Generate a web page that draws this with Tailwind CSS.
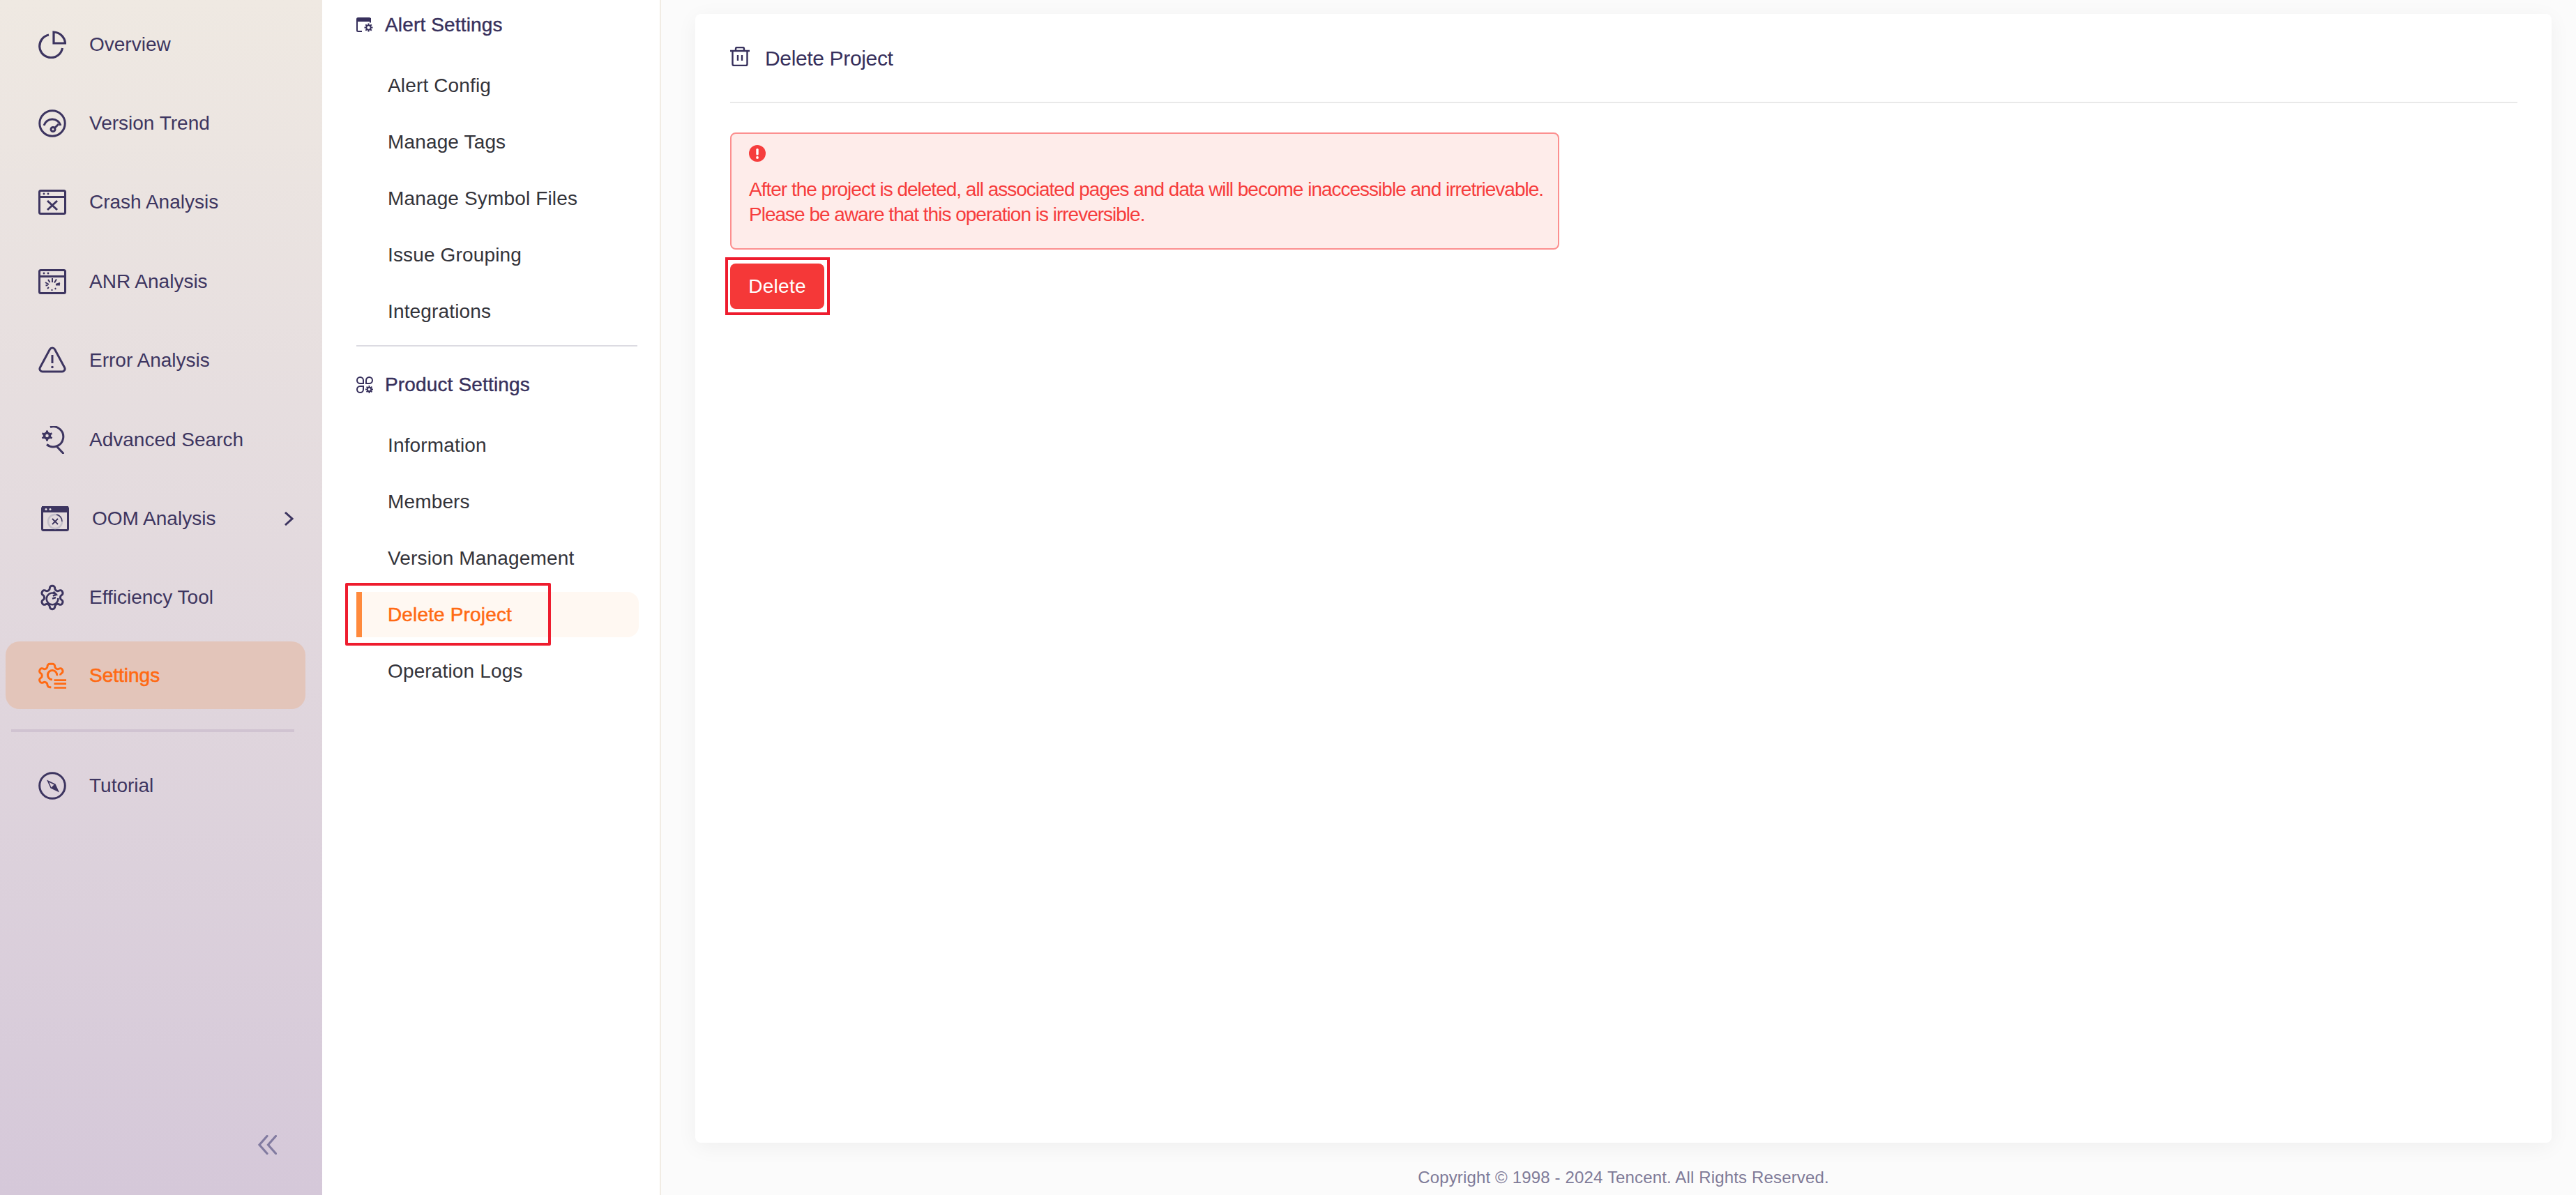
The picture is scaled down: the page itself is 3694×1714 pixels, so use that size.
<!DOCTYPE html>
<html lang="en">
<head>
  <meta charset="UTF-8" />
  <title>Delete Project</title>
  <script src="https://cdn.jsdelivr.net/npm/@tailwindcss/browser@4"></script>
</head>
<body class="font-['Liberation_Sans',Arial,sans-serif]">
  <div class="flex h-[1714px] w-[3694px] overflow-hidden bg-[#fbfbfb]">

    <!-- Main sidebar -->
    <aside class="relative flex w-[462px] shrink-0 flex-col bg-gradient-to-b from-[#efe9e2] to-[#d5c8d9] pt-[7px] text-[28px] text-[#3d3560]">
      <a class="flex h-[113.4px] items-center gap-[33px] pl-[55px]">
        <svg class="h-10 w-10" viewBox="0 0 40 40" fill="none" stroke="currentColor" stroke-width="3.2"><path d="M15 6A16.5 16.5 0 1 0 34.5 25"/><path d="M22 2v16h16.5A17 17 0 0 0 22 2z"/></svg>
        <span>Overview</span>
      </a>
      <a class="flex h-[113.4px] items-center gap-[33px] pl-[55px]">
        <svg class="h-10 w-10" viewBox="0 0 40 40" fill="none" stroke="currentColor" stroke-width="3"><circle cx="20" cy="20" r="18.2"/><path d="M8 23A12.5 12.5 0 0 1 32 23"/><circle cx="21" cy="28.5" r="3"/><path d="M23.5 26.5L29 21"/></svg>
        <span>Version Trend</span>
      </a>
      <a class="flex h-[113.4px] items-center gap-[33px] pl-[55px]">
        <svg class="h-10 w-10" viewBox="0 0 40 40" fill="none" stroke="currentColor" stroke-width="3"><rect x="1.5" y="3.5" width="37" height="33" rx="2"/><path d="M2 12.5h36"/><path d="M13 18l14 13M27 18L13 31"/><circle cx="8" cy="8" r="1.4" fill="currentColor" stroke="none"/><circle cx="14" cy="8" r="1.4" fill="currentColor" stroke="none"/></svg>
        <span>Crash Analysis</span>
      </a>
      <a class="flex h-[113.4px] items-center gap-[33px] pl-[55px]">
        <svg class="h-10 w-10" viewBox="0 0 40 40" fill="none" stroke="currentColor" stroke-width="3"><rect x="1.5" y="3.5" width="37" height="33" rx="2"/><path d="M2 12.5h36"/><circle cx="8" cy="8" r="1.4" fill="currentColor" stroke="none"/><circle cx="14" cy="8" r="1.4" fill="currentColor" stroke="none"/><path stroke-width="2" d="M20 15v6M26 16.5l-3 5M31 22l-6 2M31 24.5h-6M14 17l2.500 4M10 21l5 3M10.500 25.500l3-.5M13 30l2-2M19.500 33v-2M25 31l-1-2"/></svg>
        <span>ANR Analysis</span>
      </a>
      <a class="flex h-[113.4px] items-center gap-[33px] pl-[55px]">
        <svg class="h-10 w-10" viewBox="0 0 40 40" fill="none" stroke="currentColor" stroke-width="3"><path d="M16.500 4a4 4 0 0 1 7 0L37.500 30a4 4 0 0 1-3.500 6H6a4 4 0 0 1-3.500-6z"/><path d="M20 12v12"/><circle cx="20" cy="29.500" r="1.800" fill="currentColor" stroke="none"/></svg>
        <span>Error Analysis</span>
      </a>
      <a class="flex h-[113.4px] items-center gap-[33px] pl-[55px]">
        <svg class="h-10 w-10" viewBox="0 0 40 40" fill="none" stroke="currentColor" stroke-width="3"><path d="M17 1.500A14.500 14.500 0 1 1 12 26.500"/><path d="M27 30l8.500 9" stroke-linecap="round"/><circle cx="12.500" cy="14" r="4" stroke-width="3.500"/><path stroke-width="3" d="M12.500 6.500v3M12.500 18.500v3M5.500 10.500l3 1.500M16.500 16l3 1.500M5.500 17.500l3-1.500M16.500 12l3-1.500"/></svg>
        <span>Advanced Search</span>
      </a>
      <a class="flex h-[113.4px] items-center pl-[59px] pr-[41px]">
        <svg class="mr-[33px] h-10 w-10" viewBox="0 0 40 40" fill="none" stroke="currentColor" stroke-width="3"><rect x="1.500" y="3.500" width="37" height="33" rx="2"/><rect x="1" y="2" width="38" height="9" fill="currentColor" stroke="none"/><circle cx="7" cy="6.500" r="1.500" fill="#e8e2e6" stroke="none"/><circle cx="13" cy="6.500" r="1.500" fill="#e8e2e6" stroke="none"/><circle cx="20" cy="24" r="10" stroke="#c4bfca" stroke-width="2.500"/><path stroke-width="1.800" d="M16 20l8 8M24 20l-8 8"/><path stroke-width="1.500" d="M22 14a10 10 0 0 1 8 10"/></svg>
        <span class="flex-1">OOM Analysis</span>
        <svg class="h-[20px] w-[14px]" viewBox="0 0 14 20" fill="none" stroke="currentColor" stroke-width="3"><path d="M2 1l10 9-10 9"/></svg>
      </a>
      <a class="flex h-[113.4px] items-center gap-[33px] pl-[55px]">
        <svg class="h-10 w-10" viewBox="0 0 24 24" fill="none" stroke="currentColor" stroke-width="1.800"><path d="M12.220 2h-.44a2 2 0 0 0-2 2v.18a2 2 0 0 1-1 1.730l-.43.25a2 2 0 0 1-2 0l-.15-.08a2 2 0 0 0-2.730.73l-.22.38a2 2 0 0 0 .73 2.730l.15.1a2 2 0 0 1 1 1.720v.51a2 2 0 0 1-1 1.740l-.15.09a2 2 0 0 0-.73 2.730l.22.38a2 2 0 0 0 2.730.73l.15-.08a2 2 0 0 1 2 0l.43.25a2 2 0 0 1 1 1.730V20a2 2 0 0 0 2 2h.44a2 2 0 0 0 2-2v-.18a2 2 0 0 1 1-1.730l.43-.25a2 2 0 0 1 2 0l.15.08a2 2 0 0 0 2.730-.73l.22-.39a2 2 0 0 0-.73-2.730l-.15-.08a2 2 0 0 1-1-1.740v-.5a2 2 0 0 1 1-1.740l.15-.09a2 2 0 0 0 .73-2.730l-.22-.38a2 2 0 0 0-2.730-.73l-.15.08a2 2 0 0 1-2 0l-.43-.25a2 2 0 0 1-1-1.730V4a2 2 0 0 0-2-2z"/><path stroke-width="1.500" d="M15.500 9.500A5 5 0 1 0 17 12.500"/><path stroke-width="1.500" d="M13 7l2.500 2.500-3 1M12 13l3-1"/></svg>
        <span>Efficiency Tool</span>
      </a>
      <a class="mt-1.5 ml-2 flex h-[97px] w-[430px] items-center gap-[33px] rounded-[20px] bg-[#e3c5ba] pl-[47px] text-[#ff6a13]">
        <svg class="h-10 w-10" viewBox="0 0 24 24" fill="none" stroke="currentColor" stroke-width="1.800">
          <path d="M11 22H9.780a2 2 0 0 1-2-2v-.18a2 2 0 0 0-1-1.730l-.43-.25a2 2 0 0 0-2 0l-.15.08a2 2 0 0 1-2.730-.73l-.22-.38a2 2 0 0 1 .73-2.730l.15-.09a2 2 0 0 0 1-1.740v-.51a2 2 0 0 0-1-1.720l-.15-.1a2 2 0 0 1-.73-2.730l.22-.38a2 2 0 0 1 2.730-.73l.15.08a2 2 0 0 0 2 0l.43-.25a2 2 0 0 0 1-1.730V4a2 2 0 0 1 2-2h2.440a2 2 0 0 1 2 2v.18a2 2 0 0 0 1 1.730l.43.25a2 2 0 0 0 2 0l.15-.08a2 2 0 0 1 2.730.73l.22.38a2 2 0 0 1-.73 2.730l-.15.09a2 2 0 0 0-1 1.740"/>
          <path d="M12 15.500a4 4 0 1 1 4-3.500"/>
          <path stroke-width="1.600" d="M13.500 16H24M13.500 19H24M13.500 22.500H24"/>
        </svg>
        <span class="[-webkit-text-stroke:0.6px_#ff6a13]">Settings</span>
      </a>
      <div class="mx-4 mt-[29px] h-1 w-[406px] bg-[#d0c3d1]"></div>
      <a class="mt-[20px] flex h-[113.4px] items-center gap-[33px] pl-[55px]">
        <svg class="h-10 w-10" viewBox="0 0 40 40" fill="none" stroke="currentColor" stroke-width="3"><circle cx="20" cy="20" r="18.300"/><path d="M12 11.500L24.500 17.500 30 29.500 17.500 23.500z" stroke="none" fill="currentColor"/><path d="M15.500 15l7 3.500-4 4z" stroke="none" fill="#dfd2da"/></svg>
        <span>Tutorial</span>
      </a>
      <svg class="absolute left-[369px] top-[1628px] h-7 w-7" viewBox="0 0 28 28" fill="none" stroke="#827ba0" stroke-width="3.200" stroke-linecap="round"><path d="M14 1.500L3 14l11 12.500M26.500 1.500L15.500 14l11 12.500"/></svg>
    </aside>

    <!-- Settings menu -->
    <nav class="w-[486px] shrink-0 border-r-2 border-[#f1ece4] bg-white pl-[49px] pr-[32px] pt-[3px] text-[28px] tracking-[0.15px] text-[#33333a]">
      <div class="flex h-[65px] items-center gap-[17px] text-[#37305c]">
        <svg class="h-6 w-6" viewBox="0 0 24 24" fill="none" stroke="currentColor" stroke-width="2"><path d="M8 21H2.500A1.500 1.500 0 0 1 1 19.500v-16A1.500 1.500 0 0 1 2.500 2h16A1.500 1.500 0 0 1 20 3.500v5"/><rect x="1" y="2" width="20" height="5" fill="currentColor" stroke="none"/><circle cx="17.500" cy="15.500" r="3.200"/><path d="M17.500 9.500v2.500M17.500 19v2.500M11.500 15.500H14M21 15.500h2.500M13.300 11.300l1.800 1.800M20 18l1.800 1.800M13.300 19.700l1.800-1.800M20 13l1.800-1.800"/></svg>
        <span class="[-webkit-text-stroke:0.4px_#37305c]">Alert Settings</span>
      </div>
      <a class="mt-[22px] flex h-[65px] items-center pl-[45px]">Alert Config</a>
      <a class="mt-4 flex h-[65px] items-center pl-[45px]">Manage Tags</a>
      <a class="mt-4 flex h-[65px] items-center pl-[45px]">Manage Symbol Files</a>
      <a class="mt-4 flex h-[65px] items-center pl-[45px]">Issue Grouping</a>
      <a class="mt-4 flex h-[65px] items-center pl-[45px]">Integrations</a>
      <div class="mt-[16px] h-0.5 bg-[#dcdbe2]"></div>
      <div class="mt-[22px] flex h-[65px] items-center gap-[17px] text-[#37305c]">
        <svg class="h-6 w-6" viewBox="0 0 24 24" fill="none" stroke="currentColor" stroke-width="2"><path d="M5.500 1A4.500 4.500 0 0 1 10 5.500V10H5.500a4.500 4.500 0 0 1 0-9zM18.500 1A4.500 4.500 0 0 0 14 5.500V10h4.500a4.500 4.500 0 0 0 0-9zM5.500 23A4.500 4.500 0 0 0 10 18.500V14H5.500a4.500 4.500 0 0 0 0 9z"/><circle cx="18.500" cy="18.500" r="2.800"/><path d="M18.500 13v2.500M18.500 21.500V24M13 18.500h2.500M21.500 18.500H24M14.600 14.600l1.800 1.800M20.600 20.600l1.800 1.800M14.600 22.400l1.800-1.800M20.600 16.400l1.800-1.800"/></svg>
        <span class="[-webkit-text-stroke:0.4px_#37305c]">Product Settings</span>
      </div>
      <a class="mt-[22px] flex h-[65px] items-center pl-[45px]">Information</a>
      <a class="mt-4 flex h-[65px] items-center pl-[45px]">Members</a>
      <a class="mt-4 flex h-[65px] items-center pl-[45px]">Version Management</a>
      <a class="relative mt-4 -mr-0.5 flex h-[65px] items-center rounded-r-[16px] border-l-8 border-[#ff8a3d] bg-[#fff8f2] pl-[37px] text-[#ff6a13]">
        <span class="[-webkit-text-stroke:0.5px_#ff6a13]">Delete Project</span>
        <span class="absolute left-[-24px] top-[-13px] h-[90px] w-[295px] rounded-[2px] border-4 border-[#ee1c2e]"></span>
      </a>
      <a class="mt-4 flex h-[65px] items-center pl-[45px]">Operation Logs</a>
    </nav>

    <!-- Content -->
    <main class="flex min-w-0 flex-1 flex-col pl-[49px] pr-[35px] pt-5">
      <section class="h-[1619px] rounded-lg bg-white pl-[50px] pr-[49px] pt-[36px] shadow-[0_6px_30px_rgba(0,0,0,0.05)]">
        <div class="flex h-[92px] items-start gap-[22px] border-b-2 border-[#e9e9e9] pt-[10px] text-[30px] tracking-[-0.35px] text-[#37305c]">
          <svg class="mt-px h-7 w-7" viewBox="0 0 28 28" fill="none" stroke="currentColor" stroke-width="2.400"><path d="M0 6h28M8 6V3a2 2 0 0 1 2-2h8a2 2 0 0 1 2 2v3M3.500 6v19a2 2 0 0 0 2 2h17a2 2 0 0 0 2-2V6M11 12v8M17 12v8"/></svg>
          <span class="mt-[4px] leading-[28px]">Delete Project</span>
        </div>
        <div class="mt-[42px] h-[168px] w-[1189px] rounded-lg border-2 border-[#fc8f8f] bg-[#feecea] pl-[25px] pt-4 text-[28px] leading-9 tracking-[-1px] text-[#f63d3d]">
          <svg class="h-6 w-6" viewBox="0 0 24 24"><circle cx="12" cy="12" r="12" fill="#f63d3d"/><rect x="10.300" y="5" width="3.400" height="9.500" rx="1.500" fill="#fff"/><circle cx="12" cy="18" r="1.900" fill="#fff"/></svg>
          <p class="mt-[22px] whitespace-nowrap">After the project is deleted, all associated pages and data will become inaccessible and irretrievable.<br />Please be aware that this operation is irreversible.</p>
        </div>
        <button class="relative mt-5 h-[65px] w-[135px] rounded-lg bg-[#f53838] text-[28px] tracking-[0.3px] text-white">
          Delete
          <span class="absolute left-[-7px] top-[-9px] h-[83px] w-[150px] border-4 border-[#ee1c2e]"></span>
        </button>
      </section>
      <footer class="mt-[37px] text-center text-[24px] leading-[26px] tracking-[0.15px] text-[#7e7a98]">Copyright © 1998 - 2024 Tencent. All Rights Reserved.</footer>
    </main>
  </div>
</body>
</html>
